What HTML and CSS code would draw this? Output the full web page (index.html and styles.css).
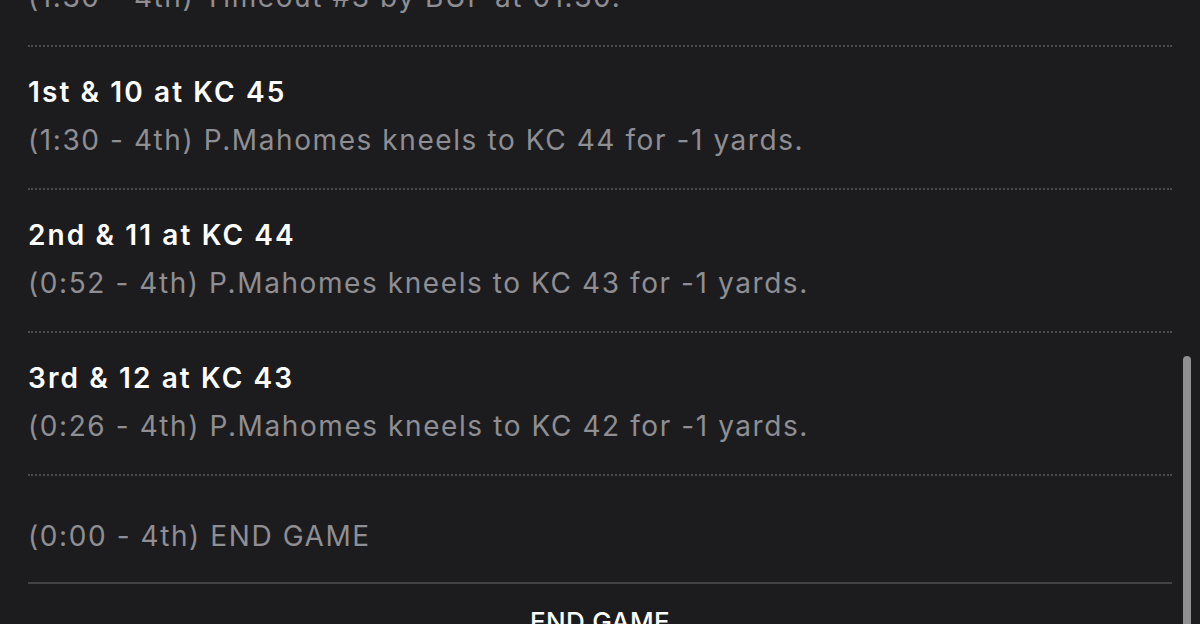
FILE: index.html
```html
<!DOCTYPE html>
<html lang="en">
<head>
  <meta charset="UTF-8">
  <meta name="viewport" content="width=device-width, initial-scale=1.0">
  <title>Play by Play</title>
  <link rel="stylesheet" href="styles.css">
</head>
<body>
  <div class="feed">
    <div class="play play-first">
      <div class="play-desc">(1:30 - 4th) Timeout #3 by BUF at 01:30.</div>
    </div>
    <div class="play">
      <div class="play-down">1st &amp; 10 at KC 45</div>
      <div class="play-desc">(1:30 - 4th) P.Mahomes kneels to KC 44 for -1 yards.</div>
    </div>
    <div class="play">
      <div class="play-down">2nd &amp; 11 at KC 44</div>
      <div class="play-desc">(0:52 - 4th) P.Mahomes kneels to KC 43 for -1 yards.</div>
    </div>
    <div class="play">
      <div class="play-down">3rd &amp; 12 at KC 43</div>
      <div class="play-desc">(0:26 - 4th) P.Mahomes kneels to KC 42 for -1 yards.</div>
    </div>
    <div class="play play-last">
      <div class="play-desc">(0:00 - 4th) END GAME</div>
    </div>
    <div class="drive-result">END GAME</div>
  </div>
  <div class="scrollbar"></div>
</body>
</html>
```

FILE: styles.css
```css
html, body {
  margin: 0;
  height: 100%;
}
body {
  font-family: Inter, "Noto Sans", sans-serif;
  background-color: #1c1c1e;
  overflow: hidden;
  position: relative;
}
.feed {
  padding: 0 28px;
}
.play {
  padding: 25px 0 28px;
  border-bottom: 2px dotted #4a4a4d;
}
/* scrolled list: the first row is partly above the top edge */
.play-first {
  margin-top: -96px;
  padding-top: 73px;
}
.play-down {
  color: #ffffff;
  font-size: 28px;
  font-weight: 600;
  letter-spacing: 2.1px;
  line-height: 40px;
  margin-bottom: 8px;
}
.play-desc {
  color: #8e8e93;
  font-size: 28px;
  letter-spacing: 1.58px;
  line-height: 40px;
}
.play-last {
  padding: 40px 0 26px;
  border-bottom: 2px solid #434345;
}
.drive-result {
  color: #ffffff;
  font-size: 26px;
  font-weight: 500;
  letter-spacing: 0.3px;
  line-height: 40px;
  text-align: center;
  padding-top: 18px;
}
.scrollbar {
  position: absolute;
  left: 1183px;
  top: 356px;
  width: 8px;
  height: 300px;
  border-radius: 4px;
  background-color: #8f8f91;
}
```
